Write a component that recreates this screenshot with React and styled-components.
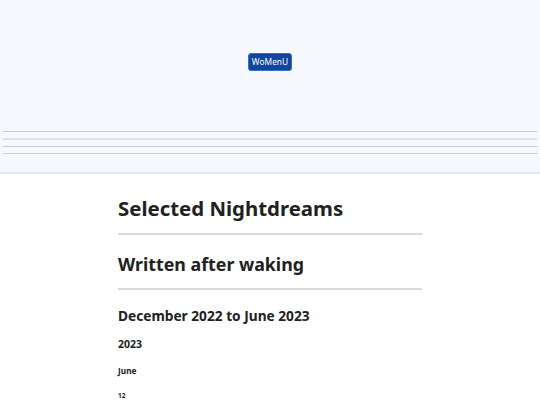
import React from 'react'
import styled, { createGlobalStyle } from 'styled-components'

const GlobalStyle = createGlobalStyle`
  html, body {
    margin: 0;
    padding: 0;
    background: #ffffff;
    font-family: "Noto Sans", "Open Sans", sans-serif;
    color: #212121;
  }
`

const Header = styled.header`
  display: flex;
  flex-direction: column;
  align-items: center;
  height: 174px;
  padding: 53px 3px 0;
  box-sizing: border-box;
  background: #f5f8ff;
  border-bottom: 2px solid #e1e5ee;
`

const MenuButton = styled.button`
  height: 18px;
  padding: 0 3px;
  border: 1px solid #3b6fc4;
  border-radius: 3px;
  background: #0d47a1;
  color: #ffffff;
  font-family: inherit;
  font-size: 8.4px;
  line-height: 16px;
`

const Rules = styled.div`
  display: flex;
  flex-direction: column;
  gap: 6px;
  width: 100%;
  margin-top: 60px;
`

const Rule = styled.div`
  height: ${(p) => (p.$thick ? 2 : 1)}px;
  background: ${(p) => (p.$thick ? '#dde1ea' : '#c9ccd8')};
`

const Main = styled.main`
  width: 304px;
  margin: 0 auto;
  padding-top: 21px;
`

const Heading = styled.div`
  margin: 0;
  font-weight: 700;
  font-size: ${(p) => p.$size}px;
  line-height: ${(p) => p.$lh}px;
  margin-top: ${(p) => p.$top || 0}px;
`

const Divider = styled.hr`
  margin: ${(p) => p.$top}px 0 0;
  border: 0;
  height: 2px;
  background: #dadada;
`

export default function App() {
  return (
    <>
      <GlobalStyle />
      <Header>
        <MenuButton>WoMenU</MenuButton>
        <Rules>
          <Rule />
          <Rule $thick />
          <Rule />
          <Rule />
        </Rules>
      </Header>
      <Main>
        <Heading as="h1" $size={20.4} $lh={26}>Selected Nightdreams</Heading>
        <Divider $top={12} />
        <Heading as="h2" $size={17.8} $lh={24} $top={17}>Written after waking</Heading>
        <Divider $top={12} />
        <Heading as="h3" $size={13.7} $lh={20} $top={16}>December 2022 to June 2023</Heading>
        <Heading as="h4" $size={10.5} $lh={14} $top={11}>2023</Heading>
        <Heading as="h5" $size={8.3} $lh={12} $top={14}>June</Heading>
        <Heading as="h6" $size={6.5} $lh={10} $top={14}>12</Heading>
      </Main>
    </>
  )
}
